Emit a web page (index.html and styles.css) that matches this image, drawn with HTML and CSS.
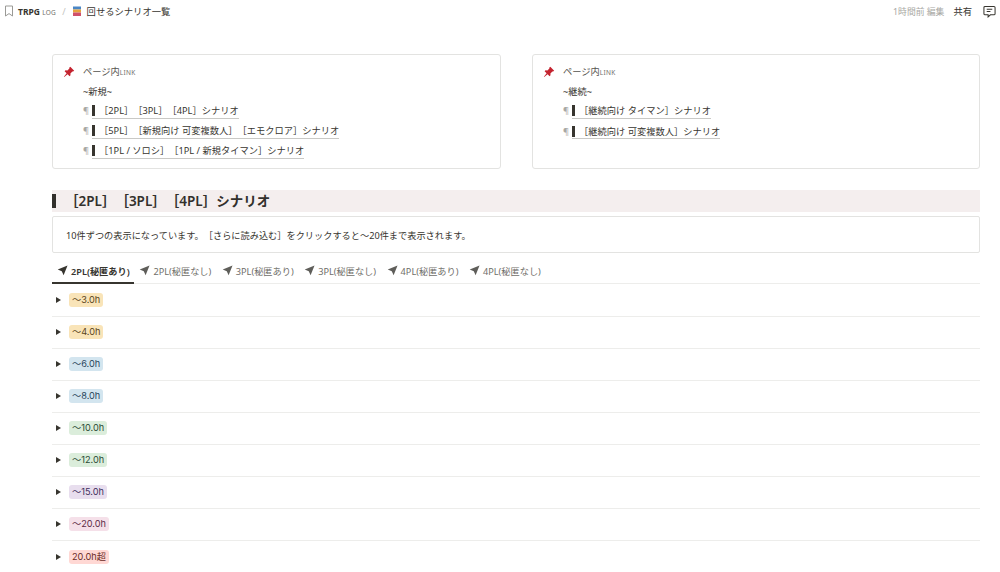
FILE: index.html
```html
<!DOCTYPE html>
<html lang="ja">
<head>
<meta charset="utf-8">
<title>回せるシナリオ一覧</title>
<link rel="stylesheet" href="styles.css">
</head>
<body>
<header class="topbar">
  <div class="crumbs">
    <svg class="bookmark" viewBox="0 0 10 12" width="10" height="12"><path d="M1.5 1h7v10L5 8.600 1.500 11z" fill="none" stroke="#9a9a96" stroke-width="1"/></svg>
    <span class="site">TRPG <span class="small">LOG</span></span>
    <span class="slash">/</span>
    <svg class="books" viewBox="0 0 10 11" width="10" height="11"><rect x="1" y="0.500" width="8" height="3" fill="#4a86c5"/><rect x="1" y="3.500" width="8" height="3" fill="#e8a33c"/><rect x="1" y="6.500" width="8" height="3.500" fill="#d0506a"/></svg>
    <span class="page-title">回せるシナリオ一覧</span>
  </div>
  <div class="actions">
    <span class="edited">1時間前 編集</span>
    <span class="share">共有</span>
    <svg class="comment" viewBox="0 0 14 14" width="13" height="13"><path d="M2.200 1.500h9.600a1.200 1.200 0 0 1 1.200 1.200v6.600a1.200 1.200 0 0 1-1.200 1.200H8L5.500 12.800v-2.300H2.200A1.200 1.200 0 0 1 1 9.300V2.700a1.200 1.200 0 0 1 1.200-1.200z" fill="none" stroke="#37352f" stroke-width="1.100"/><path d="M4 4.500h6M4 7h4" stroke="#37352f" stroke-width="1.100"/></svg>
  </div>
</header>

<main class="content">
  <section class="cards">
    <div class="card">
      <svg class="pin" viewBox="0 0 12 12" width="12" height="12"><path d="M7.300.8l3.900 3.900-1.100.9-.7-.2-2 2 .1 1.900-.9.900-2-2L1.200 11 .9 10.700l2.700-3.500-2-2 .9-.9 1.900.1 2-2-.2-.7z" fill="#c4232f"/></svg>
      <div class="card-body">
        <p class="card-title">ページ内<span class="small">LINK</span></p>
        <p class="group">~新規~</p>
        <p class="anchor"><span class="mark">¶</span><a><b class="bar"></b>［2PL］［3PL］［4PL］シナリオ</a></p>
        <p class="anchor"><span class="mark">¶</span><a><b class="bar"></b>［5PL］［新規向け 可変複数人］［エモクロア］シナリオ</a></p>
        <p class="anchor"><span class="mark">¶</span><a><b class="bar"></b>［1PL / ソロシ］［1PL / 新規タイマン］シナリオ</a></p>
      </div>
    </div>
    <div class="card">
      <svg class="pin" viewBox="0 0 12 12" width="12" height="12"><path d="M7.300.8l3.900 3.900-1.100.9-.7-.2-2 2 .1 1.900-.9.900-2-2L1.200 11 .9 10.700l2.700-3.500-2-2 .9-.9 1.900.1 2-2-.2-.7z" fill="#c4232f"/></svg>
      <div class="card-body">
        <p class="card-title">ページ内<span class="small">LINK</span></p>
        <p class="group">~継続~</p>
        <p class="anchor"><span class="mark">¶</span><a><b class="bar"></b>［継続向け タイマン］シナリオ</a></p>
        <p class="anchor"><span class="mark">¶</span><a><b class="bar"></b>［継続向け 可変複数人］シナリオ</a></p>
      </div>
    </div>
  </section>

  <h2 class="band"><b class="band-bar"></b>［2PL］［3PL］［4PL］シナリオ</h2>
  <div class="notice">10件ずつの表示になっています。［さらに読み込む］をクリックすると～20件まで表示されます。</div>

  <nav class="tabs">
    <span class="tab active"><svg class="nav" viewBox="0 0 12 12" width="11" height="11"><path d="M11.500.500L0.800 4.800l4.400 2 2 4.400z"/></svg>2PL(秘匿あり)</span>
    <span class="tab"><svg class="nav" viewBox="0 0 12 12" width="11" height="11"><path d="M11.500.500L0.800 4.800l4.400 2 2 4.400z"/></svg>2PL(秘匿なし)</span>
    <span class="tab"><svg class="nav" viewBox="0 0 12 12" width="11" height="11"><path d="M11.500.500L0.800 4.800l4.400 2 2 4.400z"/></svg>3PL(秘匿あり)</span>
    <span class="tab"><svg class="nav" viewBox="0 0 12 12" width="11" height="11"><path d="M11.500.500L0.800 4.800l4.400 2 2 4.400z"/></svg>3PL(秘匿なし)</span>
    <span class="tab"><svg class="nav" viewBox="0 0 12 12" width="11" height="11"><path d="M11.500.500L0.800 4.800l4.400 2 2 4.400z"/></svg>4PL(秘匿あり)</span>
    <span class="tab"><svg class="nav" viewBox="0 0 12 12" width="11" height="11"><path d="M11.500.500L0.800 4.800l4.400 2 2 4.400z"/></svg>4PL(秘匿なし)</span>
  </nav>

  <ul class="rows">
    <li class="row"><i class="tri"></i><span class="pill yellow">～3.0h</span></li>
    <li class="row"><i class="tri"></i><span class="pill yellow">～4.0h</span></li>
    <li class="row"><i class="tri"></i><span class="pill blue">～6.0h</span></li>
    <li class="row"><i class="tri"></i><span class="pill blue">～8.0h</span></li>
    <li class="row"><i class="tri"></i><span class="pill green">～10.0h</span></li>
    <li class="row"><i class="tri"></i><span class="pill green">～12.0h</span></li>
    <li class="row"><i class="tri"></i><span class="pill purple">～15.0h</span></li>
    <li class="row"><i class="tri"></i><span class="pill pink">～20.0h</span></li>
    <li class="row"><i class="tri"></i><span class="pill red">20.0h超</span></li>
  </ul>
</main>
</body>
</html>
```

FILE: styles.css
```css
* { box-sizing: border-box; }
html, body { margin: 0; padding: 0; height: 572px; overflow: hidden; background: #fff; }
body { font-family: "Noto Sans", "Noto Sans CJK JP", sans-serif; color: #37352f; font-size: 10px; text-spacing-trim: space-all; font-weight: 400; }
p { margin: 0; }

.topbar { height: 22px; display: flex; justify-content: space-between; align-items: center; padding: 0 4px 0 4px; font-size: 9.300px; }
.crumbs, .actions { display: flex; align-items: center; }
.bookmark { margin-right: 4px; }
.site { font-weight: 700; font-size: 8.500px; }
.small { font-size: 6.500px; font-weight: 400; letter-spacing: .3px; color: #6f6e69; }
.slash { color: #c4c4c0; margin: 0 6px 0 6px; }
.books { margin-right: 5px; }
.page-title { color: #37352f; }
.edited { color: #a8a8a4; margin-right: 9px; font-size: 8.800px; }
.share { margin-right: 11px; }
.comment { display: block; }

.content { padding: 32px 20px 0 52px; }
.cards { display: grid; grid-template-columns: 449px 448px; column-gap: 31px; }
.card { height: 115px; border: 1px solid #e3e3e1; border-radius: 3px; padding: 9px 10px; display: flex; }
.pin { margin-right: 8px; flex: none; margin-top: 2px; }
.card-body { display: flex; flex-direction: column; font-size: 9.250px; }
.card-title { height: 15px; line-height: 15px; color: #55534e; }
.group { height: 22px; padding-top: 4px; line-height: 18px; }
.anchor { height: 20.400px; line-height: 20px; display: flex; align-items: center; }
.mark { color: #a8a8a4; width: 9px; }
.anchor a { border-bottom: 1px solid #c9c9c6; line-height: 15px; height: 15px; display: flex; align-items: center; }
.bar { display: block; width: 3px; height: 11px; background: #37352f; margin-right: 4px; }

.band { margin: 21px 0 0; height: 22px; background: #f4eeee; font-size: 13.500px; font-weight: 600; line-height: 21px; display: flex; align-items: center; color: #32302c; }
.band-bar { display: block; width: 4px; height: 14px; background: #32302c; margin-right: 9px; }

.notice { margin-top: 4px; height: 37px; border: 1px solid #e3e3e1; border-radius: 2px; padding: 0 13px; display: flex; align-items: center; font-size: 9.200px; }

.tabs { margin-top: 6px; height: 25px; display: flex; border-bottom: 1px solid #ededeb; font-size: 9.200px; padding-bottom: 0; }
.tab { height: 23px; display: flex; align-items: center; padding: 0 5px; width: 82.400px; color: #6f6e69; white-space: nowrap; }
.tab.active { color: #37352f; font-weight: 600; box-shadow: 0 1px 0 #37352f, 0 2px 0 #37352f; }
.nav { margin-right: 3px; fill: #5f5e5a; flex: none; }
.tab.active .nav { fill: #37352f; }

.rows { list-style: none; margin: 0; padding: 1px 0 0; }
.row { height: 32px; border-bottom: 1px solid #ededeb; display: flex; align-items: center; padding: 0 0 1px 4px; }
.row:last-child { border-bottom: 0; }
.tri { width: 0; height: 0; border-left: 5px solid #37352f; border-top: 3px solid transparent; border-bottom: 3px solid transparent; margin-right: 8px; }
.pill { font-family: "Inter", "Noto Sans CJK JP", sans-serif; font-size: 9.200px; height: 14px; line-height: 14px; padding: 0 3px; border-radius: 3px; font-weight: 400; }
.yellow { background: #f9e4b8; color: #5a4420; }
.blue { background: #d3e5ef; color: #29445a; }
.green { background: #dbeddb; color: #2b4a35; }
.purple { background: #e8deee; color: #412f5c; }
.pink { background: #f5e0e9; color: #5c2b45; }
.red { background: #ffd8d4; color: #6b2b26; }
```
